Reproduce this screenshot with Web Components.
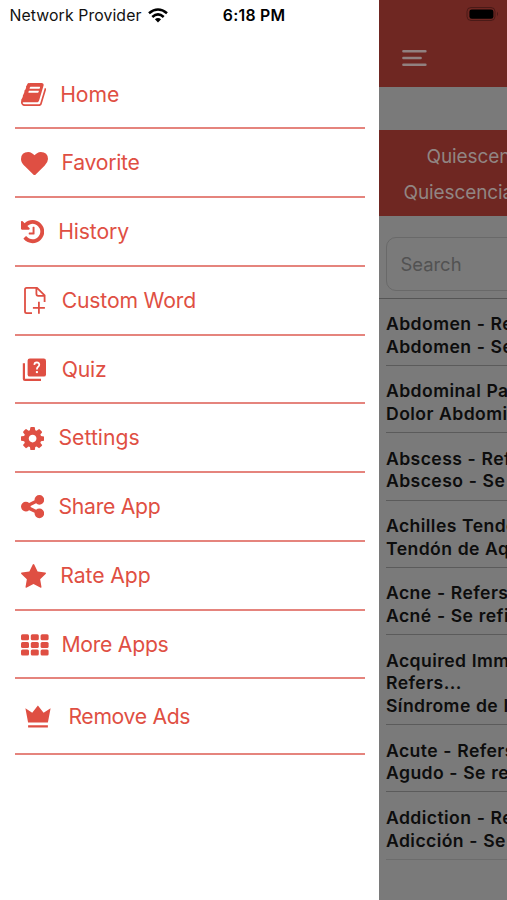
<!DOCTYPE html>
<html lang="en">
<head>
<meta charset="utf-8">
<title>Dictionary menu</title>
<style>
html,body{margin:0;height:100%;overflow:hidden;background:#fff}
body{font-family:Inter,"Liberation Sans",sans-serif}
</style>
</head>
<body>
<app-shell></app-shell>
<script>
const define=(name,html,ready)=>customElements.define(name,class extends HTMLElement{
  connectedCallback(){
    if(this.shadowRoot)return;
    const t=document.createElement('template');
    t.innerHTML=typeof html==='function'?html(this):html;
    this.attachShadow({mode:'open'}).append(t.content.cloneNode(true));
    if(ready)ready(this,this.shadowRoot);
  }
});

const icons={
home:['64 128 1664 1536',25,23.2,'<path d="M1703 478q40 57 18 129l-275 906q-19 64-76.5 107.5T1247 1664H324q-77 0-148.5-53.5T76 1479q-24-67-2-127 0-4 3-27t4-37q1-8-3-21.5t-3-19.5q2-11 8-21t16.5-23.5T116 1179q23-38 45-91.5t30-91.5q3-10 .5-30t-.5-28q3-11 17-28t17-23q21-36 42-92t25-90q1-9-2.5-32t.5-28q4-13 22-30.5t22-22.5q19-26 42.5-84.5T404 411q1-8-3-25.5t-2-26.5q2-8 9-18t18-23 17-21q8-12 16.5-30.5t15-35 16-36 19.5-32 26.5-23.5 36-11.5T620 134l-1 3q38-9 51-9h761q74 0 114 56t18 130l-274 906q-36 119-71.5 153.5T1089 1408H220q-27 0-38 15-11 16-1 43 24 70 144 70h923q29 0 56-15.5t35-41.5l300-987q7-22 5-57 38 15 59 43zm-1064 2q-4 13 2 22.5t20 9.5h608q13 0 25.5-9.5T1311 480l21-64q4-13-2-22.5t-20-9.5H702q-13 0-25.5 9.5T660 416zm-83 256q-4 13 2 22.5t20 9.5h608q13 0 25.5-9.5T1228 736l21-64q4-13-2-22.5t-20-9.5H619q-13 0-25.5 9.5T577 672z"/>'],
heart:['0 128 1792 1536',27,23.2,'<path d="M896 1664q-26 0-44-18l-624-602q-10-8-27.5-26T145 952.5 77 855 23.5 734 0 596q0-220 127-344t351-124q62 0 126.5 21.5t120 58T820 276t76 68q36-36 76-68t95.5-68.5 120-58T1314 128q224 0 351 124t127 344q0 221-229 450l-623 600q-18 18-44 18z"/>'],
history:['128 128 1536 1536',23.2,23.2,'<path d="M1664 896q0 156-61 298t-164 245-245 164-298 61q-172 0-327-72.5T305 1387q-7-10-6.5-22.5t8.5-20.5l137-138q10-9 25-9 16 2 23 12 73 95 179 147t225 52q104 0 198.5-40.5t163.5-109.5 109.5-163.5 40.5-198.5-40.5-198.5-109.5-163.5-163.5-109.5-198.5-40.5q-98 0-188 35.5t-160 101.5l137 138q31 30 14 69-17 40-59 40H192q-26 0-45-19t-19-45V256q0-42 40-59 39-17 69 14l130 129q107-101 244.5-156.5T896 128q156 0 298 61t245 164 164 245 61 298zM1024 608v448q0 14-9 23t-23 9H672q-14 0-23-9t-9-23v-64q0-14 9-23t23-9h224V608q0-14 9-23t23-9h64q14 0 23 9t9 23z"/>'],
doc:['0 0 27 29',27,29,'<path d="M11 27.2H5.6Q4 27.2 4 25.6V3.4Q4 1.8 5.6 1.8H16L23.6 9.4V16M15.4 1.8V7.8Q15.4 9.9 17.4 9.9H23.6M17.9 15.8V27.8M11.9 21.8H23.9" fill="none" stroke="currentColor" stroke-width="1.8"/>'],
quiz:['0 0 27 24',27,24,'<path d="M2.9 5.2V20.9Q2.9 21.9 3.9 21.9H20" fill="none" stroke="currentColor" stroke-width="2.2"/><rect x="6.6" y=".6" width="18.4" height="18" rx="2.2"/><path d="M13.3 6.9Q13.4 4.3 15.8 4.3 18.3 4.4 18.3 6.7 18.3 8 16.9 9 15.9 9.8 15.9 11.4" fill="none" stroke="#fff" stroke-width="1.7"/><rect x="14.9" y="13.1" width="2" height="2" fill="#fff"/>'],
cog:['128 128 1536 1536',23.2,23.2,'<path d="M1152 896q0-106-75-181t-181-75-181 75-75 181 75 181 181 75 181-75 75-181zm512-109v222q0 12-8 23t-20 13l-185 28q-19 54-39 91 35 50 107 138 10 12 10 25t-9 23q-27 37-99 108t-94 71q-12 0-26-9l-138-108q-44 23-91 38-16 136-29 186-7 28-36 28H785q-14 0-24.5-8.5T749 1634l-28-184q-49-16-90-37l-141 107q-10 9-25 9-14 0-25-11-126-114-165-168-7-10-7-23 0-12 8-23 15-21 51-66.5t54-70.5q-27-50-41-99l-183-27q-13-2-21-12.5t-8-23.5V783q0-12 8-23t19-13l186-28q14-46 39-92-40-57-107-138-10-12-10-24 0-10 9-23 26-36 98.5-107.5T465 263q13 0 26 10l138 107q44-23 91-38 16-136 29-186 7-28 36-28h222q14 0 24.5 8.5T1043 158l28 184q49 16 90 37l142-107q9-9 24-9 13 0 25 10 129 119 165 170 7 8 7 22 0 12-8 23-15 21-51 66.5t-54 70.5q26 50 41 98l183 28q13 2 21 12.5t8 23.5z"/>'],
share:['128 128 1536 1536',23.2,23.2,'<path d="M1344 1024q133 0 226.5 93.5T1664 1344t-93.5 226.5T1344 1664t-226.5-93.5T1024 1344q0-12 2-34l-360-180q-92 86-218 86-133 0-226.5-93.5T128 896t93.5-226.5T448 576q126 0 218 86l360-180q-2-22-2-34 0-133 93.5-226.5T1344 128t226.5 93.5T1664 448t-93.5 226.5T1344 768q-126 0-218-86L766 862q2 22 2 34t-2 34l360 180q92-86 218-86z"/>'],
star:['64 32 1664 1587',25,23.8,'<path d="M1728 647q0 22-26 48l-363 354 86 500q1 7 1 20 0 21-10.5 35.5T1385 1619q-19 0-40-12l-449-236-449 236q-22 12-40 12-21 0-31.5-14.5T365 1569q0-6 2-20l86-500L89 695q-25-27-25-48 0-37 56-46l502-73L847 73q19-41 49-41t49 41l225 455 502 73q56 9 56 46z"/>'],
grid:['0 0 27.6 22',27.6,22,[0,9.8,19.6].flatMap(x=>[0.2,7.9,15.6].map(y=>`<rect x="${x}" y="${y}" width="8" height="6" rx="1.5"/>`)).join('')],
crown:['0 0 26 24',26,24,'<path d="M.4 3.2 7.2 7.8 12.9.6 18.6 7.8 25.6 3.2 22.9 17.6H3.1ZM3.1 20.2H22.9V22.6H3.1Z"/>']
};

/* Stretches its slotted label to the width attribute by letter spacing. */
define('fit-text',`<style>:host{display:block;white-space:nowrap}span{display:inline-block}</style><span><slot></slot></span>`,(el,r)=>{
  const s=r.querySelector('span'),n=el.textContent.length;
  s.style.letterSpacing=((+el.getAttribute('width')-s.getBoundingClientRect().width)/n)+'px';
});

define('menu-icon',el=>{
  const [vb,w,h,body]=icons[el.getAttribute('name')];
  return `<style>:host{display:block}svg{display:block;fill:currentColor}</style><svg viewBox="${vb}" width="${w}" height="${h}" preserveAspectRatio="none">${body}</svg>`;
});

define('menu-item',el=>{
  const x=+el.getAttribute('text-x')+.9,ix=+(el.getAttribute('icon-x')||21.3);
  return `<style>
:host{display:block;height:68.75px;color:#df4f43}
:host([tall]){height:75.3px}
.row{box-sizing:border-box;height:100%;display:grid;grid-template-columns:${x-ix}px 1fr;align-items:center;padding:1.4px 0 0 ${ix-14.5}px;border-bottom:2px solid #e5847d;font-size:21.2px}
fit-text{margin-top:-2px}
</style><div class="row"><menu-icon name="${el.getAttribute('icon')}"></menu-icon><fit-text width="${el.getAttribute('width')}">${el.textContent}</fit-text></div>`;
});

define('status-bar',`<style>
:host{display:flex;height:30px;box-sizing:border-box;padding-left:9.5px;align-items:center;color:#111;font-size:15.8px}
svg{margin-left:6px;flex:none}
.time{font-weight:600;margin-left:55.3px;color:#000}
</style><fit-text width="132">Network Provider</fit-text>
<svg width="20" height="15" viewBox="0 0 20 15"><g fill="none" stroke="#000" stroke-width="2.6"><path d="M1 5.3Q10-2.3 19 5.3"/><path d="M4.3 8.9Q10 4 15.7 8.9"/></g><path d="M6.9 11.3Q10 8.6 13.1 11.3L10 14.5Z"/></svg>
<fit-text class="time" width="62.5">6:18 PM</fit-text>`);

define('side-menu',`<style>
:host{display:block;width:379px;height:900px;background:#fff;flex:none}
nav{padding:30.5px 14px 0 14.5px}
</style><status-bar></status-bar><nav>
<menu-item icon="home" text-x="59.3" width="59">Home</menu-item>
<menu-item icon="heart" text-x="60.7" width="78">Favorite</menu-item>
<menu-item icon="history" text-x="57.3" width="70.8">History</menu-item>
<menu-item icon="doc" text-x="60.8" width="134.3">Custom Word</menu-item>
<menu-item icon="quiz" text-x="60.8" width="44.8">Quiz</menu-item>
<menu-item icon="cog" text-x="57.6" width="81.3">Settings</menu-item>
<menu-item icon="share" text-x="57.6" width="102">Share App</menu-item>
<menu-item icon="star" text-x="59.3" width="90.5">Rate App</menu-item>
<menu-item icon="grid" text-x="60.6" width="107">More Apps</menu-item>
<menu-item tall icon="crown" icon-x="25.2" text-x="67.5" width="121.8">Remove Ads</menu-item>
</nav>`);

define('word-entry',`<style>
:host{display:block;box-sizing:border-box;margin-left:7px;padding:14.5px 0 6px;line-height:22.75px;font-size:17.6px;font-weight:600;letter-spacing:.42px;word-spacing:.4px;color:#0d0d0d;white-space:nowrap;border-bottom:1px solid #5b5b5b;height:67.35px}
:host([lines="3"]){height:89.9px}
:host([last]){border-color:#6c6c6c}
</style><slot></slot>`);

define('top-bar',`<style>
:host{display:block;height:87px;background:#6f2722;box-sizing:border-box;padding-top:7px}
svg{display:block}.b{margin-left:87px}.m{margin:27.5px 0 0 22.7px}
</style>
<svg class="b" width="34" height="14" viewBox="0 0 34 14"><rect x="1" y=".5" width="28" height="13" rx="4" fill="none" stroke="#4a1a17"/><rect x="3.4" y="2.4" width="24" height="9.4" rx="2.4"/><path d="M31 4.8Q33 7 31 9.2Z" fill="#4a1a17"/></svg>
<svg class="m" width="25" height="18" viewBox="0 0 25 18" stroke="#918180" stroke-width="2.5" stroke-linecap="round"><path d="M1.4 2.2H23.4M1.4 9H18.6M1.4 15.8H23.4"/></svg>`);

define('word-banner',`<style>
:host{display:block;height:86px;background:#6f2722;margin-top:43px;color:#918583;font-size:19px;line-height:36px;box-sizing:border-box;padding-top:8.5px;white-space:nowrap;overflow:hidden;letter-spacing:-.1px}
.a{padding-left:47.5px}.c{padding-left:24.5px}
</style><div class="a">Quiescence</div><div class="c">Quiescencia</div>`);

define('search-box',`<style>
:host{display:block;padding:20.5px 0 7px 7px;border-bottom:1px solid #555}
div{box-sizing:border-box;width:300px;height:54px;border:1.5px solid #696969;border-radius:10px;padding-left:13.5px;line-height:52px;font-size:18.4px;color:#525252}
</style><div><fit-text width="61">Search</fit-text></div>`);

define('word-page',`<style>
:host{display:block;flex:1;min-width:0;overflow:hidden;background:#7a7a7a;height:900px}
</style><top-bar></top-bar><word-banner></word-banner><search-box></search-box>
<word-entry>Abdomen - Refers<br>Abdomen - Se</word-entry>
<word-entry>Abdominal Pain<br>Dolor Abdominal</word-entry>
<word-entry>Abscess - Refers<br>Absceso - Se</word-entry>
<word-entry>Achilles Tendon<br>Tendón de Aquiles</word-entry>
<word-entry>Acne - Refers<br>Acné - Se refiere</word-entry>
<word-entry lines="3">Acquired Immune<br>Refers...<br>Síndrome de I</word-entry>
<word-entry>Acute - Refers<br>Agudo - Se refiere</word-entry>
<word-entry last>Addiction - Refers<br>Adicción - Se</word-entry>`);

define('app-shell',`<style>:host{display:flex;width:507px;height:900px;overflow:hidden}</style><side-menu></side-menu><word-page></word-page>`);
</script>
</body>
</html>
